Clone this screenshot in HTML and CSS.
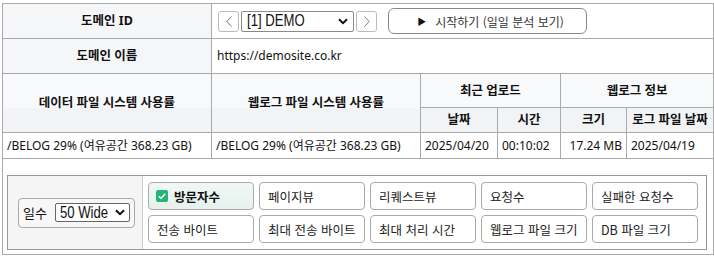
FILE: index.html
```html
<!DOCTYPE html>
<html lang="ko">
<head>
<meta charset="utf-8">
<title>도메인 정보</title>
<link rel="stylesheet" href="styles.css">
</head>
<body>
<table class="info">
  <colgroup>
    <col class="c1"><col class="c2"><col class="c3"><col class="c4"><col class="c5"><col class="c6">
  </colgroup>
  <tr class="r-id">
    <th>도메인 ID</th>
    <td colspan="5" class="ctrl-cell">
      <div class="ctrl">
        <button class="nav" type="button"><svg width="6" height="11" viewBox="0 0 6 11"><polyline points="5.5,0.5 0.8,5.5 5.5,10.5" fill="none" stroke="#777" stroke-width="1"/></svg></button>
        <div class="sel sel-domain"><span class="sel-text">[1] DEMO</span><svg class="chev" width="10" height="7" viewBox="0 0 10 7"><polyline points="1,1.2 5,5.2 9,1.2" fill="none" stroke="#111" stroke-width="2"/></svg></div>
        <button class="nav" type="button"><svg width="6" height="11" viewBox="0 0 6 11"><polyline points="0.5,0.5 5.2,5.5 0.5,10.5" fill="none" stroke="#777" stroke-width="1"/></svg></button>
        <button class="start" type="button"><span class="tri">&#9654;</span>시작하기 (일일 분석 보기)</button>
      </div>
    </td>
  </tr>
  <tr class="r-name">
    <th>도메인 이름</th>
    <td colspan="5" class="url">https://demosite.co.kr</td>
  </tr>
  <tr class="h1">
    <th rowspan="2" class="span2">데이터 파일 시스템 사용률</th>
    <th rowspan="2" class="span2">웹로그 파일 시스템 사용률</th>
    <th colspan="2">최근 업로드</th>
    <th colspan="2">웹로그 정보</th>
  </tr>
  <tr class="h2">
    <th>날짜</th><th>시간</th><th>크기</th><th>로그 파일 날짜</th>
  </tr>
  <tr class="data">
    <td>/BELOG 29% (여유공간 368.23 GB)</td>
    <td>/BELOG 29% (여유공간 368.23 GB)</td>
    <td>2025/04/20</td>
    <td>00:10:02</td>
    <td class="num">17.24 MB</td>
    <td>2025/04/19</td>
  </tr>
  <tr class="panel-row">
    <td colspan="6" class="panel-cell">
      <div class="panel">
        <div class="panel-left">
          <div class="days">
            <span class="days-label">일수</span>
            <div class="sel sel-days"><span class="sel-text">50 Wide</span><svg class="chev" width="10" height="7" viewBox="0 0 10 7"><polyline points="1,1.2 5,5.2 9,1.2" fill="none" stroke="#111" stroke-width="2"/></svg></div>
          </div>
        </div>
        <div class="metrics">
          <button class="metric on" type="button"><span class="check"><svg width="12" height="12" viewBox="0 0 12 12"><polyline points="2.8,6.2 5,8.4 9.2,3.8" fill="none" stroke="#fff" stroke-width="1.5"/></svg></span>방문자수</button>
          <button class="metric" type="button">페이지뷰</button>
          <button class="metric" type="button">리퀘스트뷰</button>
          <button class="metric" type="button">요청수</button>
          <button class="metric" type="button">실패한 요청수</button>
          <button class="metric" type="button">전송 바이트</button>
          <button class="metric" type="button">최대 전송 바이트</button>
          <button class="metric" type="button">최대 처리 시간</button>
          <button class="metric" type="button">웹로그 파일 크기</button>
          <button class="metric" type="button">DB 파일 크기</button>
        </div>
      </div>
    </td>
  </tr>
</table>
</body>
</html>
```

FILE: styles.css
```css
* { box-sizing: border-box; }

body {
  margin: 0;
  padding: 3px 1px 0 2px;
  background: #fff;
  color: #111;
  font-family: "Noto Sans", "Noto Sans CJK KR", sans-serif;
  font-size: 12px;
}

.info {
  border-collapse: collapse;
  table-layout: fixed;
  width: 711px;
}

.c1 { width: 209px; }
.c2 { width: 209px; }
.c3 { width: 77px; }
.c4 { width: 63px; }
.c5 { width: 66px; }
.c6 { width: 87px; }

.info th,
.info td {
  border: 1px solid #aaa;
  padding: 0 4px;
  line-height: 16px;
  white-space: nowrap;
  overflow: hidden;
}

.info th {
  font-weight: bold;
  text-align: center;
  color: #111;
  font-size: 12.5px;
}

.r-id { height: 35px; }
.r-name { height: 35px; }
.h1 { height: 34px; }
.h2 { height: 25px; }
.data { height: 26px; }

.r-id th, .r-name th { background: #f5f6f8; }
.h1 th { background: #f8f9fa; }
.h2 th { background: #f2f3f5; }
.info .h1 th.span2 { background: linear-gradient(#f8f9fa 0 34px, #f2f3f5 34px); }

.info .ctrl-cell { padding: 0 6px; }

.ctrl {
  display: flex;
  align-items: center;
}

.nav {
  width: 21px;
  height: 21px;
  padding: 0;
  border: 1px solid #bbb;
  border-radius: 3px;
  background: #fff;
  display: flex;
  align-items: center;
  justify-content: center;
}

.sel {
  display: flex;
  align-items: center;
  justify-content: space-between;
  border: 1px solid #8a8a8a;
  border-radius: 2px;
  background: #fff;
  color: #111;
  font-family: "Liberation Sans", Arial, sans-serif;
  font-size: 16px;
  line-height: 18px;
  overflow: hidden;
}

.sel-text {
  display: inline-block;
  transform: scaleX(0.82);
  transform-origin: left center;
  white-space: nowrap;
}

.sel-domain {
  width: 113px;
  height: 21px;
  margin: 0 2px;
  padding: 0 5px 0 5px;
}

.start {
  margin-left: 11px;
  width: 199px;
  height: 26px;
  border: 1px solid #888;
  border-radius: 6px;
  background: #fff;
  color: #333;
  font-family: "Noto Sans CJK KR", "Noto Sans", sans-serif;
  font-size: 12px;
  display: flex;
  align-items: center;
  justify-content: center;
  padding: 0 0 0 6px;
}

.tri {
  font-size: 9px;
  color: #111;
  margin-right: 9px;
}

.info .url { padding-left: 5px; }

.info .num { text-align: right; }

.info .panel-cell { padding: 16px 6px 4px 4px; }

.panel {
  display: flex;
  border: 1px solid #999;
}

.panel-left {
  width: 135px;
  background: #f5f5f5;
  border-right: 1px solid #ccc;
  display: flex;
  align-items: center;
  padding-left: 10px;
}

.days {
  display: flex;
  align-items: center;
  width: 117px;
  height: 30px;
  border: 1px solid #aaa;
  border-radius: 4px;
  background: #f7f7f7;
  padding: 0 4px;
}

.days-label {
  font-family: "Noto Sans CJK KR", sans-serif;
  font-size: 13px;
  margin-right: 8px;
}

.sel-days {
  width: 78px;
  height: 19px;
  padding: 0 4px 0 4px;
  border-color: #666;
}

.sel-days .sel-text { margin-right: -12px; }

.metrics {
  display: grid;
  grid-template-columns: repeat(5, 106px);
  grid-auto-rows: 28px;
  gap: 5px;
  padding: 6px 6px 6px 5px;
}

.metric {
  display: flex;
  align-items: center;
  height: 28px;
  border: 1px solid #aaa;
  border-radius: 4px;
  background: #fff;
  color: #222;
  font-family: "Noto Sans CJK KR", "Noto Sans", sans-serif;
  font-size: 12.5px;
  padding: 0 8px;
  text-align: left;
  white-space: nowrap;
}

.metric.on {
  background: linear-gradient(#f1f8f5, #e5f1ec);
  font-weight: bold;
  color: #111;
  font-size: 12.5px;
  padding-left: 7px;
}

.check {
  width: 12px;
  height: 12px;
  border-radius: 2px;
  background: #22b573;
  display: inline-flex;
  margin-right: 6px;
}
```
